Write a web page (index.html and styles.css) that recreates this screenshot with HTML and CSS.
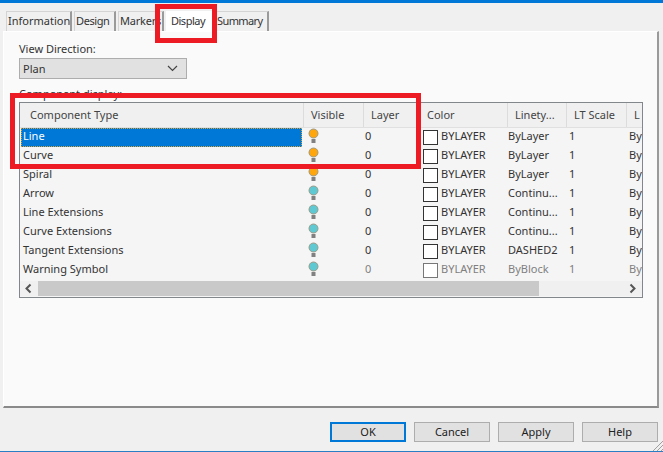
FILE: index.html
```html
<!DOCTYPE html>
<html lang="en">
<head>
    <meta charset="UTF-8">
    <title>Display</title>
    <link rel="stylesheet" href="styles.css">
</head>
<body>
    <svg class="defs" width="0" height="0">
        <symbol id="bulb" viewBox="0 0 11 15">
            <circle cx="5.5" cy="5.5" r="4.5" fill="currentColor" stroke="#9c9a86" stroke-width="1"/>
            <rect x="3.5" y="11" width="4" height="4" fill="#808080"/>
        </symbol>
    </svg>
    <div class="window">
        <div class="tabs">
            <div class="tab tab-info">Information</div>
            <div class="tab tab-design">Design</div>
            <div class="tab tab-markers">Markers</div>
            <div class="tab tab-display">Display</div>
            <div class="tab tab-summary">Summary</div>
        </div>
        <div class="panel">
            <div class="label">View Direction:</div>
            <div class="select">
                <span>Plan</span>
                <svg width="11" height="7" viewBox="0 0 11 7"><path d="M1 1l4.5 4.5L10 1" fill="none" stroke="#444" stroke-width="1.2"/></svg>
            </div>
            <div class="label label-grid">Component display:</div>
            <div class="grid">
                <div class="row head">
                    <div class="c c-type">Component Type</div>
                    <div class="c c-vis">Visible</div>
                    <div class="c c-layer">Layer</div>
                    <div class="c c-color">Color</div>
                    <div class="c c-lt">Linety...</div>
                    <div class="c c-scale">LT Scale</div>
                    <div class="c c-last">L</div>
                </div>
                <div class="row on">
                    <div class="c c-type"><span class="name selected">Line</span></div>
                    <div class="c c-vis"><svg class="bulb"><use href="#bulb"/></svg></div>
                    <div class="c c-layer">0</div>
                    <div class="c c-color"><i class="swatch"></i>BYLAYER</div>
                    <div class="c c-lt">ByLayer</div>
                    <div class="c c-scale">1</div>
                    <div class="c c-last">By</div>
                </div>
                <div class="row on">
                    <div class="c c-type"><span class="name">Curve</span></div>
                    <div class="c c-vis"><svg class="bulb"><use href="#bulb"/></svg></div>
                    <div class="c c-layer">0</div>
                    <div class="c c-color"><i class="swatch"></i>BYLAYER</div>
                    <div class="c c-lt">ByLayer</div>
                    <div class="c c-scale">1</div>
                    <div class="c c-last">By</div>
                </div>
                <div class="row on">
                    <div class="c c-type"><span class="name">Spiral</span></div>
                    <div class="c c-vis"><svg class="bulb"><use href="#bulb"/></svg></div>
                    <div class="c c-layer">0</div>
                    <div class="c c-color"><i class="swatch"></i>BYLAYER</div>
                    <div class="c c-lt">ByLayer</div>
                    <div class="c c-scale">1</div>
                    <div class="c c-last">By</div>
                </div>
                <div class="row">
                    <div class="c c-type"><span class="name">Arrow</span></div>
                    <div class="c c-vis"><svg class="bulb"><use href="#bulb"/></svg></div>
                    <div class="c c-layer">0</div>
                    <div class="c c-color"><i class="swatch"></i>BYLAYER</div>
                    <div class="c c-lt">Continu...</div>
                    <div class="c c-scale">1</div>
                    <div class="c c-last">By</div>
                </div>
                <div class="row">
                    <div class="c c-type"><span class="name">Line Extensions</span></div>
                    <div class="c c-vis"><svg class="bulb"><use href="#bulb"/></svg></div>
                    <div class="c c-layer">0</div>
                    <div class="c c-color"><i class="swatch"></i>BYLAYER</div>
                    <div class="c c-lt">Continu...</div>
                    <div class="c c-scale">1</div>
                    <div class="c c-last">By</div>
                </div>
                <div class="row">
                    <div class="c c-type"><span class="name">Curve Extensions</span></div>
                    <div class="c c-vis"><svg class="bulb"><use href="#bulb"/></svg></div>
                    <div class="c c-layer">0</div>
                    <div class="c c-color"><i class="swatch"></i>BYLAYER</div>
                    <div class="c c-lt">Continu...</div>
                    <div class="c c-scale">1</div>
                    <div class="c c-last">By</div>
                </div>
                <div class="row">
                    <div class="c c-type"><span class="name">Tangent Extensions</span></div>
                    <div class="c c-vis"><svg class="bulb"><use href="#bulb"/></svg></div>
                    <div class="c c-layer">0</div>
                    <div class="c c-color"><i class="swatch"></i>BYLAYER</div>
                    <div class="c c-lt">DASHED2</div>
                    <div class="c c-scale">1</div>
                    <div class="c c-last">By</div>
                </div>
                <div class="row muted">
                    <div class="c c-type"><span class="name">Warning Symbol</span></div>
                    <div class="c c-vis"><svg class="bulb"><use href="#bulb"/></svg></div>
                    <div class="c c-layer">0</div>
                    <div class="c c-color"><i class="swatch"></i>BYLAYER</div>
                    <div class="c c-lt">ByBlock</div>
                    <div class="c c-scale">1</div>
                    <div class="c c-last">By</div>
                </div>
                <div class="scrollbar">
                    <svg class="arrow" width="18" height="15" viewBox="0 0 18 15"><path d="M10.5 3.5L6.5 7.5l4 4" fill="none" stroke="#555" stroke-width="2"/></svg>
                    <div class="thumb"></div>
                    <svg class="arrow arrow-r" width="18" height="15" viewBox="0 0 18 15"><path d="M7.5 3.5l4 4-4 4" fill="none" stroke="#555" stroke-width="2"/></svg>
                </div>
            </div>
        </div>
        <div class="buttons">
            <div class="btn default">OK</div>
            <div class="btn">Cancel</div>
            <div class="btn">Apply</div>
            <div class="btn">Help</div>
        </div>
        <svg class="grip" width="11" height="11" viewBox="0 0 11 11"><path d="M11 1L1 11M11 5l-6 6M11 9l-2 2" stroke="#a0a0a0" stroke-width="1"/></svg>
        <div class="mark mark-tab"></div>
        <div class="mark mark-rows"></div>
    </div>
</body>
</html>
```

FILE: styles.css
```css
html, body { margin: 0; padding: 0; }
body { font-family: "Noto Sans", "Liberation Sans", sans-serif; font-size: 11px; color: #333; background: #f0f0f0; }
.defs { position: absolute; }
.window { position: relative; width: 663px; height: 452px; box-sizing: border-box; overflow: hidden; border-top: 3px solid #0078d7; border-bottom: 1px solid #2a7fc4; background: #f0f0f0; }

.tabs { display: flex; height: 20px; margin-top: 8px; padding-left: 6px; }
.tab { height: 20px; box-sizing: border-box; padding: 0 0 0 1px; margin-right: 2px; line-height: 17px; white-space: nowrap; border: 1px solid #d4d4d4; border-right: 2px solid #9a9a9a; border-bottom: none; background: #f0f0f0; }
.tab-info { width: 66px; }
.tab-design { width: 42px; letter-spacing: -0.4px; }
.tab-markers { width: 46px; letter-spacing: -0.2px; }
.tab-display { width: 47px; height: 21px; padding-left: 4px; letter-spacing: -0.5px; background: #fff; border-color: #fff; position: relative; }
.tab-summary { width: 54px; padding-left: 1px; letter-spacing: -0.6px; }

.panel { height: 377px; box-sizing: border-box; margin: 0 4px 0 3px; padding: 9px 15px 0 15px; background: #fafafa; border: 1px solid #fff; border-right: 2px solid #9a9a9a; border-bottom: 2px solid #8a8a8a; }
.label { height: 16px; line-height: 16px; }
.select { width: 168px; height: 21px; box-sizing: border-box; margin-top: 1px; padding: 0 8px 0 3px; display: flex; align-items: center; justify-content: space-between; background: #e1e1e1; border: 1px solid #adadad; }
.label-grid { margin-top: 7px; }

.grid { width: 624px; height: 196px; box-sizing: border-box; border: 1px solid #82878c; overflow: hidden; background: #f5f5f5; }
.row { display: flex; height: 19px; line-height: 16px; white-space: nowrap; }
.row.head { height: 24px; line-height: 24px; background: #f0f0f0; border-bottom: 1px solid #e0e0e0; color: #444; }
.row.head .c { border-right: 1px solid #dcdcdc; box-sizing: border-box; padding-left: 7px; }
.row.head .c-type { padding-left: 10px; }
.c { flex: none; box-sizing: border-box; }
.c-type { width: 284px; padding-left: 1px; }
.c-vis { width: 60px; padding-left: 4px; }
.c-layer { width: 56px; padding-left: 1px; }
.c-color { width: 88px; padding-left: 3px; display: flex; align-items: flex-start; }
.c-lt { width: 59px; padding-left: 0; }
.c-scale { width: 60px; padding-left: 2px; }
.c-last { width: 14px; padding-left: 2px; }
.row.head .c-last { border-right: none; }

.name { display: block; width: 281px; height: 19px; box-sizing: border-box; padding-left: 2px; }
.name.selected { background: #0078d7; color: #fff; border: 1px dotted #e0a030; padding-left: 1px; line-height: 14px; }

.bulb { display: block; width: 11px; height: 15px; color: #5fc9d3; }
.row.on .bulb { color: #ffa60d; }
.swatch { flex: none; display: block; width: 15px; height: 15px; box-sizing: border-box; margin: 2px 3px 0 0; background: #fff; border: 1px solid #333; }
.row.muted .c-layer, .row.muted .c-color, .row.muted .c-lt, .row.muted .c-scale, .row.muted .c-last { color: #808080; }
.row.muted .swatch { border-color: #777; }

.scrollbar { display: flex; align-items: center; height: 15px; margin-top: 1px; background: #f0f0f0; }
.arrow { flex: none; }
.thumb { width: 501px; height: 15px; background: #c9c9c9; }
.arrow-r { margin-left: auto; margin-right: 1px; }

.buttons { display: flex; justify-content: flex-end; gap: 8px; padding: 14px 5px 0 0; }
.btn { width: 76px; height: 20px; box-sizing: border-box; text-align: center; line-height: 17px; color: #222; background: #e1e1e1; border: 1px solid #adadad; }
.btn.default { border: 2px solid #0078d7; line-height: 15px; }

.grip { position: absolute; right: 0; bottom: 0; }
.mark { position: absolute; box-sizing: border-box; border: 5px solid #ed1c24; }
.mark-tab { left: 155px; top: 1px; width: 62px; height: 39px; }
.mark-rows { left: 10px; top: 90px; width: 411px; height: 76px; }
```
